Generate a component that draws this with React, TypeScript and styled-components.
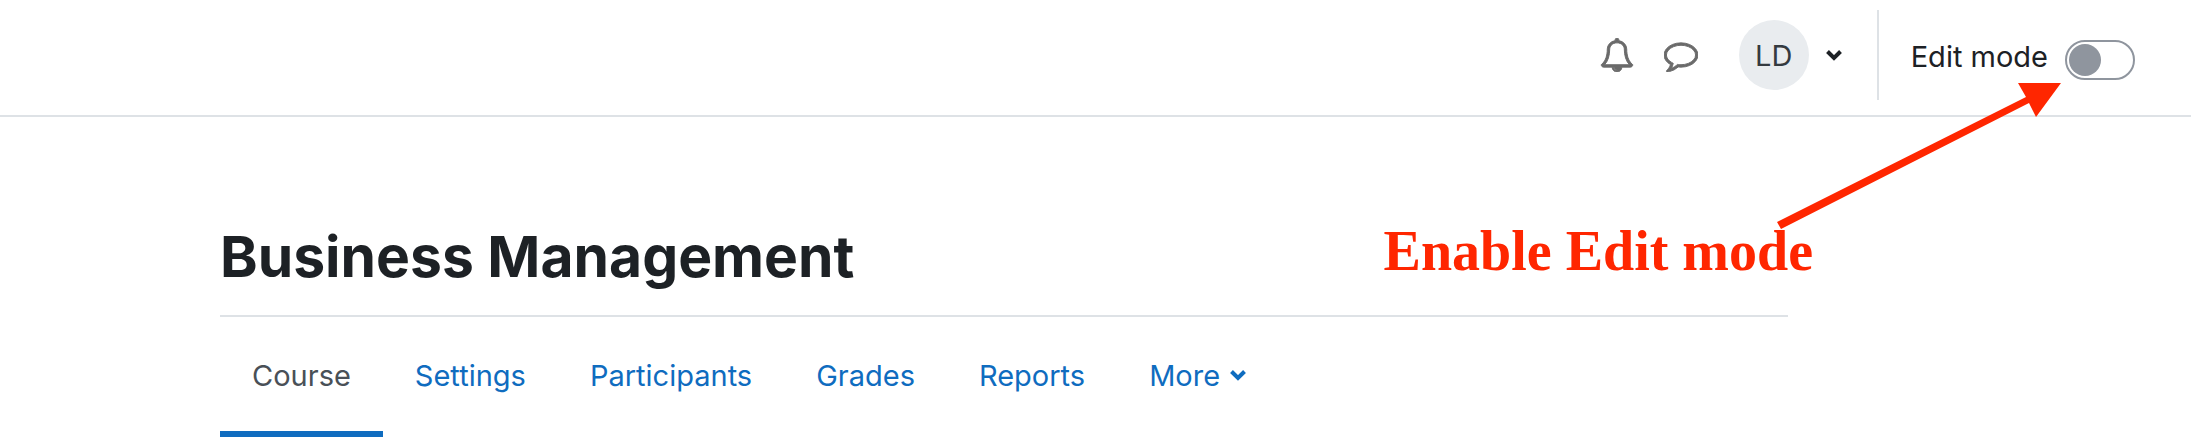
import React from "react";
import styled, { createGlobalStyle } from "styled-components";

const GlobalStyle = createGlobalStyle`
  *, *::before, *::after { box-sizing: border-box; }
  body {
    margin: 0;
    background: #fff;
    color: #1d2125;
    font-family: Inter, "Liberation Sans", sans-serif;
    font-size: 29px;
    line-height: 45px;
  }
`;

const Page = styled.div`
  position: relative;
`;

const Navbar = styled.header`
  display: flex;
  justify-content: flex-end;
  align-items: center;
  padding: 10px 56px 15px;
  border-bottom: 2px solid #dee2e6;
`;

const IconButton = styled.button`
  display: flex;
  padding: 0;
  margin-right: 30px;
  border: 0;
  background: none;
  color: #6a6a6a;
  cursor: pointer;
`;

const UserMenu = styled.button`
  display: flex;
  align-items: center;
  gap: 17px;
  margin: 0 35px 0 11px;
  padding: 0;
  border: 0;
  background: none;
  color: #1d2125;
  font: inherit;
  cursor: pointer;
`;

const Avatar = styled.span`
  display: flex;
  align-items: center;
  justify-content: center;
  width: 70px;
  height: 70px;
  border-radius: 50%;
  background: #e9ecef;
  color: #343a40;
`;

const EditMode = styled.form`
  display: flex;
  align-items: center;
  gap: 17px;
  height: 90px;
  padding-left: 32px;
  border-left: 2px solid #dee2e6;
`;

const EditLabel = styled.label`
  padding-top: 2px;
`;

const Switch = styled.input`
  appearance: none;
  display: flex;
  align-items: center;
  width: 70px;
  height: 40px;
  margin: 10px 0 0;
  padding: 2px;
  border: 2px solid #8f959e;
  border-radius: 20px;
  background: #fff;
  cursor: pointer;

  &::before {
    content: "";
    width: 32px;
    height: 32px;
    border-radius: 50%;
    background: #8f959e;
  }

  &:checked {
    justify-content: flex-end;
  }
`;

const Main = styled.main`
  padding: 104px 403px 0 220px;
`;

const Title = styled.h1`
  margin: 0;
  padding-bottom: 22px;
  border-bottom: 2px solid #dee2e6;
  font-size: 57px;
  font-weight: 700;
  line-height: 72px;
`;

const Tabs = styled.nav`
  display: flex;
`;

const Tab = styled.a<{ $active?: boolean }>`
  display: flex;
  align-items: center;
  gap: 10px;
  height: 120px;
  padding: 2px 32px 0;
  border-bottom: 6px solid ${(p) => (p.$active ? "#0f6cbf" : "transparent")};
  color: ${(p) => (p.$active ? "#495057" : "#0f6cbf")};
  text-decoration: none;
`;

const Arrow = styled.svg`
  position: absolute;
  top: 83px;
  right: 130px;
`;

const Note = styled.strong`
  position: absolute;
  top: 218px;
  right: 378px;
  color: #ff2600;
  font: 700 56px/66px "Liberation Serif", serif;
  white-space: nowrap;
`;

const BELL =
  "M912 1696q0-16-16-16-59 0-101.5-42.5t-42.5-101.5q0-16-16-16t-16 16q0 73 51.5 124.5t124.5 51.5q16 0 16-16zm-666-288h1300q-266-300-266-832 0-51-24-105t-69-103-121.5-80.5-169.5-31.5-169.5 31.5-121.5 80.5-69 103-24 105q0 532-266 832zm1482 0q0 52-38 90t-90 38h-448q0 106-75 181t-181 75-181-75-75-181h-448q-52 0-90-38t-38-90q50-42 91-88t85-119.5 74.5-158.5 50-206 19.5-260q0-152 117-282.5t307-158.5q-8-19-8-39 0-40 28-68t68-28 68 28 28 68q0 20-8 39 190 28 307 158.5t117 282.5q0 139 19.5 260t50 206 74.5 158.5 85 119.5 91 88z";

const COMMENT =
  "M896 384q-204 0-381.5 69.5t-282 187.5-104.5 255q0 112 71.5 213.5t201.5 175.5l87 50-27 96q-24 91-70 172 152-63 275-171l43-38 57 6q69 8 130 8 204 0 381.5-69.5t282-187.5 104.5-255-104.5-255-282-187.5-381.5-69.5zM1792 896q0 174-120 321.5t-326 233-450 85.5q-70 0-145-8-198 175-460 242-49 14-114 22h-5q-15 0-27-10.5t-16-27.5v-1q-3-4-.5-12t2-10 4.5-9.5l6-9 7-8.5 8-9q7-8 31-34.5t34.5-38 31-39.5 32.5-51 27-59 26-76q-157-89-247.5-220t-90.5-281q0-174 120-321.5t326-233 450-85.5 450 85.5 326 233 120 321.5z";

const Glyph = ({ d }: { d: string }) => (
  <svg width="34" height="34" viewBox="0 0 1792 1792" fill="currentColor" stroke="currentColor" strokeWidth="50" aria-hidden="true">
    <path d={d} />
  </svg>
);

const Chevron = () => (
  <svg width="16" height="12" viewBox="0 0 16 12" fill="none" stroke="currentColor" strokeWidth="4" aria-hidden="true">
    <path d="M1.5 2.5 8 9l6.5-6.5" />
  </svg>
);

const TABS = ["Settings", "Participants", "Grades", "Reports"];

export default function App() {
  return (
    <Page>
      <GlobalStyle />
      <Navbar>
        <IconButton aria-label="Notifications">
          <Glyph d={BELL} />
        </IconButton>
        <IconButton aria-label="Messages">
          <Glyph d={COMMENT} />
        </IconButton>
        <UserMenu aria-label="User menu">
          <Avatar>LD</Avatar>
          <Chevron />
        </UserMenu>
        <EditMode>
          <EditLabel htmlFor="edit-mode">Edit mode</EditLabel>
          <Switch id="edit-mode" type="checkbox" role="switch" />
        </EditMode>
      </Navbar>
      <Main>
        <Title>Business Management</Title>
        <Tabs aria-label="Course navigation">
          <Tab href="#course" $active aria-current="page">
            Course
          </Tab>
          {TABS.map((name) => (
            <Tab key={name} href={"#" + name.toLowerCase()}>
              {name}
            </Tab>
          ))}
          <Tab href="#more">
            More
            <Chevron />
          </Tab>
        </Tabs>
      </Main>
      <Arrow width="284" height="146" viewBox="0 0 284 146" fill="#ff2600" aria-hidden="true">
        <path d="M241 0H284L259 34L252 20L4 146L0 139L249 14Z" />
      </Arrow>
      <Note>Enable Edit mode</Note>
    </Page>
  );
}
